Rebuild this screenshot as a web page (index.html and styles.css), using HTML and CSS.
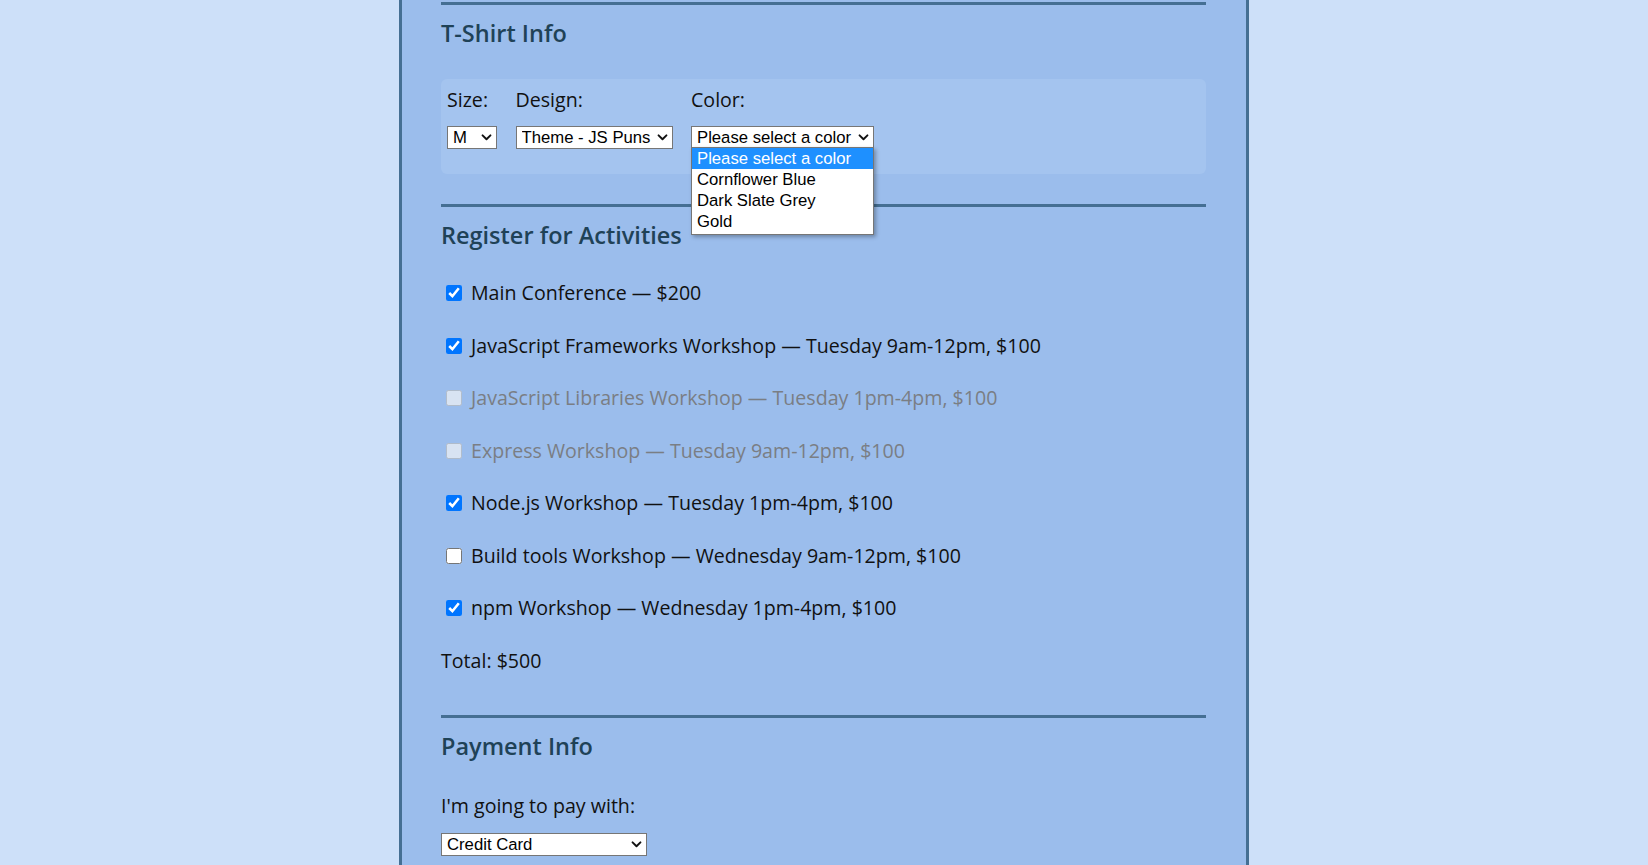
FILE: index.html
```html
<!DOCTYPE html>
<html lang="en">
<head>
<meta charset="utf-8">
<title>Register</title>
<link rel="stylesheet" href="styles.css">
</head>
<body>
<div class="container">
  <section class="section section-shirt">
    <h2 class="section-title">T-Shirt Info</h2>
    <div class="shirt-box">
      <div class="field">
        <label class="field-label">Size:</label>
        <div class="select-wrap select-size">
          <select class="select"><option>M</option></select>
          <svg class="chevron" viewBox="0 0 12 8" aria-hidden="true"><path d="M1.5 1.5 L6 6 L10.5 1.5"/></svg>
        </div>
      </div>
      <div class="field">
        <label class="field-label">Design:</label>
        <div class="select-wrap select-design">
          <select class="select"><option>Theme - JS Puns</option></select>
          <svg class="chevron" viewBox="0 0 12 8" aria-hidden="true"><path d="M1.5 1.5 L6 6 L10.5 1.5"/></svg>
        </div>
      </div>
      <div class="field">
        <label class="field-label">Color:</label>
        <div class="select-wrap select-color">
          <select class="select"><option>Please select a color</option></select>
          <svg class="chevron" viewBox="0 0 12 8" aria-hidden="true"><path d="M1.5 1.5 L6 6 L10.5 1.5"/></svg>
          <ul class="popup">
            <li class="popup-option is-active">Please select a color</li>
            <li class="popup-option">Cornflower Blue</li>
            <li class="popup-option">Dark Slate Grey</li>
            <li class="popup-option">Gold</li>
          </ul>
        </div>
      </div>
    </div>
  </section>

  <section class="section section-activities">
    <h2 class="section-title">Register for Activities</h2>
    <div class="activities">
      <label class="activity"><input type="checkbox" class="check" checked><span>Main Conference — $200</span></label>
      <label class="activity"><input type="checkbox" class="check" checked><span>JavaScript Frameworks Workshop — Tuesday 9am-12pm, $100</span></label>
      <label class="activity is-disabled"><input type="checkbox" class="check" disabled><span>JavaScript Libraries Workshop — Tuesday 1pm-4pm, $100</span></label>
      <label class="activity is-disabled"><input type="checkbox" class="check" disabled><span>Express Workshop — Tuesday 9am-12pm, $100</span></label>
      <label class="activity"><input type="checkbox" class="check" checked><span>Node.js Workshop — Tuesday 1pm-4pm, $100</span></label>
      <label class="activity"><input type="checkbox" class="check"><span>Build tools Workshop — Wednesday 9am-12pm, $100</span></label>
      <label class="activity"><input type="checkbox" class="check" checked><span>npm Workshop — Wednesday 1pm-4pm, $100</span></label>
      <p class="total">Total: $500</p>
    </div>
  </section>

  <section class="section section-payment">
    <h2 class="section-title">Payment Info</h2>
    <label class="field-label pay-label">I'm going to pay with:</label>
    <div class="select-wrap select-payment">
      <select class="select"><option>Credit Card</option></select>
      <svg class="chevron" viewBox="0 0 12 8" aria-hidden="true"><path d="M1.5 1.5 L6 6 L10.5 1.5"/></svg>
    </div>
  </section>
</div>
</body>
</html>
```
FILE: styles.css
```css
html, body {
  margin: 0;
  padding: 0;
}

body {
  background: #cde0f9;
  font-family: "Open Sans", "Noto Sans", sans-serif;
  font-size: 19.6px;
  color: #111;
  overflow: hidden;
}

.container {
  width: 765px;
  margin: 0 auto;
  padding: 2px 40px 40px 39px;
  background: #9bbdec;
  border-left: 3px solid #456f93;
  border-right: 3px solid #456f93;
  min-height: 900px;
}

.section {
  border-top: 3px solid #456f93;
}

.section-title {
  margin: 13px 0 0;
  font-size: 23.5px;
  font-weight: 600;
  line-height: 30px;
  color: #1f4257;
}

.section-shirt {
  padding-bottom: 30px;
}

.shirt-box {
  margin-top: 31px;
  display: flex;
  align-items: flex-start;
  gap: 18.5px;
  padding: 8px 6px 25px;
  background: #a4c4ef;
  border-radius: 6px;
}

.field {
  display: flex;
  flex-direction: column;
}

.field-label {
  display: block;
  line-height: 26px;
  margin-bottom: 13px;
}

.select-wrap {
  position: relative;
  height: 23px;
}

.select {
  display: block;
  width: 100%;
  height: 23px;
  margin: 0;
  padding: 0 18px 0 5px;
  -webkit-appearance: none;
  appearance: none;
  font-family: "Liberation Sans", Arial, sans-serif;
  font-size: 16.7px;
  line-height: 21px;
  color: #000;
  background: #fff;
  border: 1px solid #767676;
  border-radius: 0;
}

.chevron {
  position: absolute;
  right: 5px;
  top: 8px;
  width: 11px;
  height: 7px;
  fill: none;
  stroke: #111;
  stroke-width: 2.2;
  stroke-linecap: round;
  stroke-linejoin: round;
  pointer-events: none;
}

.select-size { width: 50px; }
.select-design { width: 157px; }
.select-color { width: 183px; }
.select-payment { width: 206px; }

.popup {
  position: absolute;
  left: 0;
  top: 21px;
  width: 181px;
  margin: 0;
  padding: 0 0 2px;
  list-style: none;
  background: #fff;
  border: 1px solid #767676;
  box-shadow: 2px 2px 4px rgba(0, 0, 0, 0.3);
  font-family: "Liberation Sans", Arial, sans-serif;
  font-size: 16.7px;
  color: #000;
  z-index: 5;
}

.popup-option {
  height: 21px;
  line-height: 21px;
  padding-left: 5px;
}

.popup-option.is-active {
  background: #1e90ff;
  color: #fff;
}

.section-activities {
  padding-bottom: 41px;
}

.activities {
  margin-top: 30px;
  display: flex;
  flex-direction: column;
  gap: 26.5px;
}

.activity {
  display: flex;
  align-items: center;
  line-height: 26px;
}

.check {
  width: 16px;
  height: 16px;
  margin: 0 9px 0 5px;
}

.activity.is-disabled {
  color: #7a7e84;
}

.total {
  margin: 0;
  line-height: 26px;
}

.pay-label {
  margin-top: 32px;
  margin-bottom: 14px;
}
```
